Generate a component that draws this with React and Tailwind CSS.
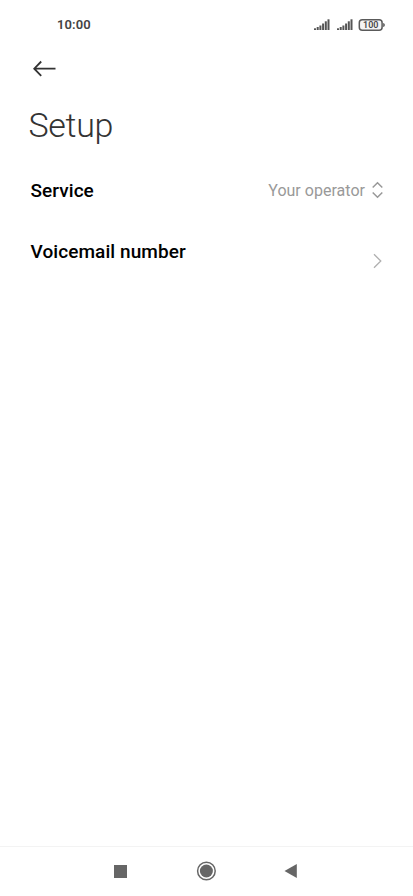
import React from 'react';

function SignalIcon() {
  return (
    <svg width="16" height="12" viewBox="0 0 16 12" fill="#555">
      <rect x="0" y="9.3" width="2" height="1.7" />
      <rect x="2.7" y="8" width="2" height="3" />
      <rect x="5.4" y="6.5" width="2" height="4.5" />
      <rect x="8.1" y="4.5" width="2" height="6.5" />
      <rect x="10.8" y="2.3" width="2" height="8.7" />
      <rect x="13.5" y="0.3" width="2" height="10.7" />
    </svg>
  );
}

function BatteryIcon() {
  return (
    <svg width="28" height="12" viewBox="0 0 28 12">
      <rect x="1.3" y="0.8" width="22.8" height="10.4" rx="3" fill="#f4f4f4" stroke="#5a5a5a" strokeWidth="1.5" />
      <path d="M25.2 4c1.1.2 1.6.9 1.6 2s-.5 1.8-1.6 2z" fill="#555" />
      <text x="12.8" y="9.2" textAnchor="middle" fontSize="9" fontWeight="600" fill="#4a4a4a">100</text>
    </svg>
  );
}

function StatusBar() {
  return (
    <div className="flex h-[50px] items-center pl-[57px] pr-[27px]">
      <span className="flex-1 text-[13px] font-semibold tracking-[0.1px] text-[#444]">10:00</span>
      <div className="flex items-center">
        <SignalIcon />
        <div className="ml-[7px]">
          <SignalIcon />
        </div>
        <div className="ml-[5px]">
          <BatteryIcon />
        </div>
      </div>
    </div>
  );
}

function NavBar() {
  return (
    <div className="flex h-[50px] items-center border-t border-[#f3f3f3] pb-px pl-[114px]">
      <div className="h-[13px] w-[13px] bg-[#666]" />
      <svg className="ml-[69px]" width="21" height="20" viewBox="0 0 21 20">
        <circle cx="10.4" cy="10" r="8.8" fill="none" stroke="#666" strokeWidth="1.5" />
        <circle cx="10.4" cy="10" r="6.5" fill="#666" />
      </svg>
      <svg className="ml-[67px]" width="13" height="14" viewBox="0 0 13 14" fill="#666">
        <path d="M12.8 0v14L.5 7z" />
      </svg>
    </div>
  );
}

export default function App() {
  return (
    <div className="flex h-[896px] w-[413px] flex-col overflow-hidden bg-white font-['Roboto',sans-serif]">
      <StatusBar />
      <div className="pl-[33px] pt-[10px]">
        <svg className="block" width="23" height="18" viewBox="0 0 23 18" fill="none" stroke="#333" strokeWidth="1.8">
          <path d="M8.2 1.5 1.2 8.7l7 7.2M1.2 8.7H22.5" />
        </svg>
      </div>
      <h1 className="mt-[27px] pl-[28.5px] text-[34px] font-light leading-10 tracking-[-0.35px] text-[#333]">Setup</h1>

      <div className="mt-[32px] flex h-7 items-center pl-[30.5px] pr-[30px]">
        <span className="flex-1 text-[19px] font-medium tracking-[0.06px] text-black">Service</span>
        <span className="text-base tracking-[0.02px] text-[#999]">Your operator</span>
        <svg className="mb-[2px] ml-[7px]" width="11" height="18" viewBox="0 0 11 18" fill="none" stroke="#999" strokeWidth="1.5">
          <path d="M.7 6.5 5.5 1.7l4.8 4.8M.7 11.5l4.8 4.8 4.8-4.8" />
        </svg>
      </div>

      <div className="mt-[33px] flex items-start pl-[30.5px] pr-[31px]">
        <span className="flex-1 text-[19px] font-medium leading-7 tracking-[0.08px] text-black">Voicemail number</span>
        <svg className="mt-[15px]" width="9" height="16" viewBox="0 0 9 16" fill="none" stroke="#b0b0b0" strokeWidth="1.3">
          <path d="M1 1.2 7.8 8 1 14.8" />
        </svg>
      </div>

      <div className="mt-auto">
        <NavBar />
      </div>
    </div>
  );
}
